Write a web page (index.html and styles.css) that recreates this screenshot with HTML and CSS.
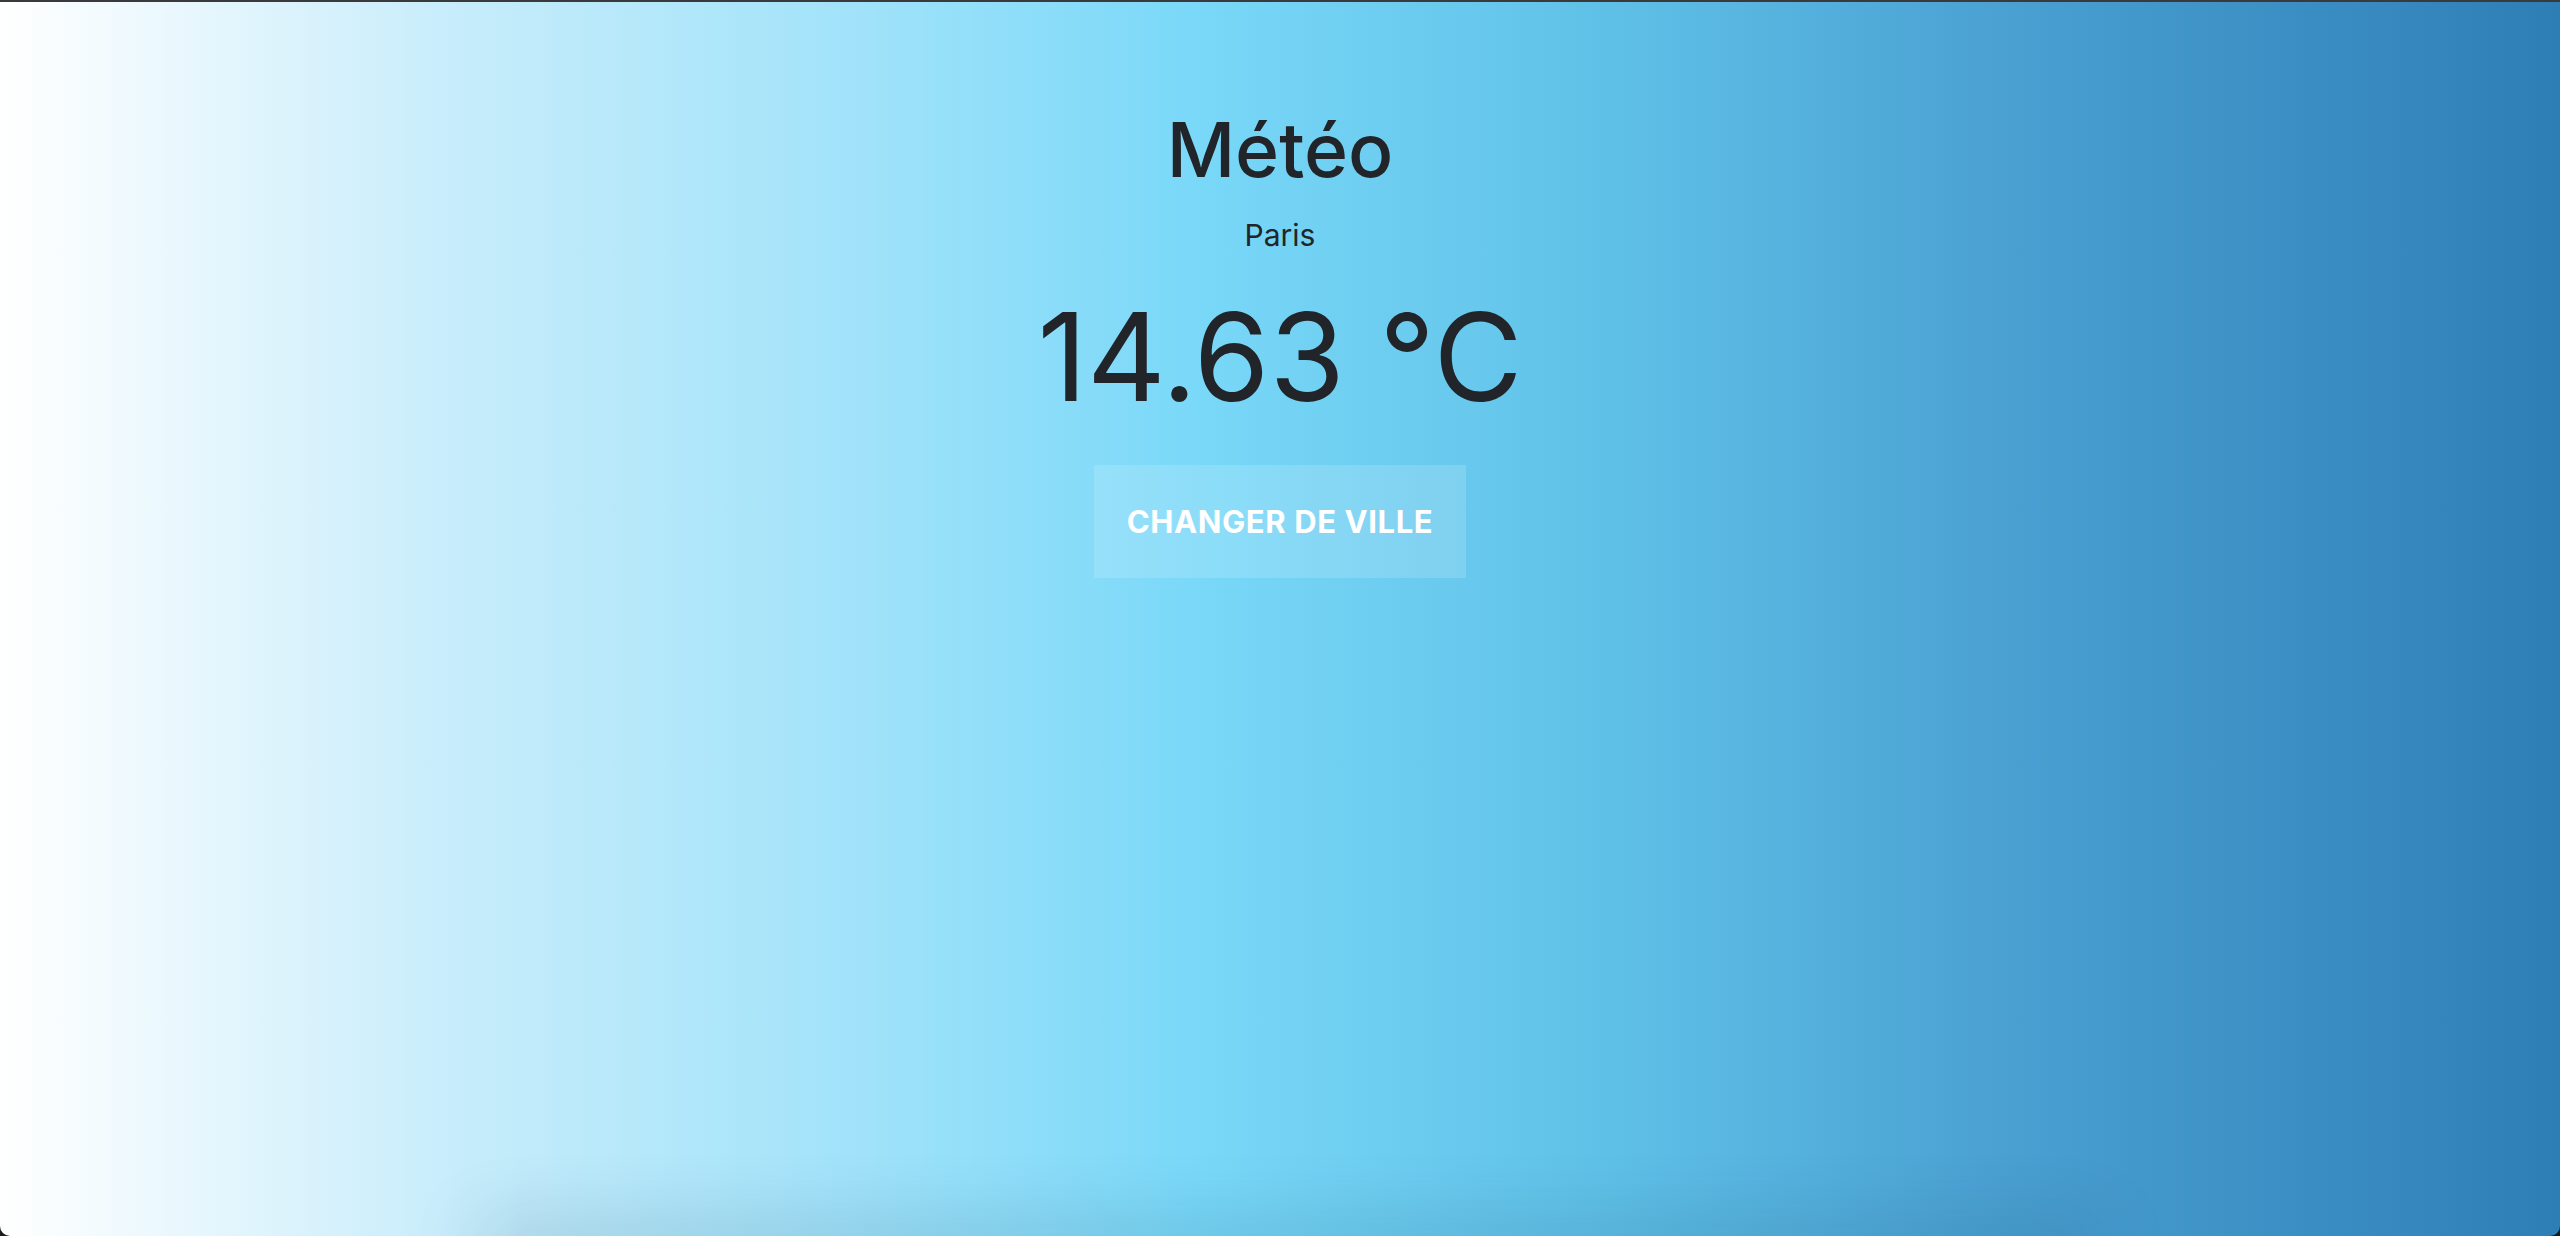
FILE: index.html
```html
<!DOCTYPE html>
<html lang="fr">
<head>
<meta charset="utf-8">
<title>Météo</title>
<link rel="stylesheet" href="styles.css">
</head>
<body>
<div class="app">
  <main class="weather">
    <h1 class="title">Météo</h1>
    <p class="city">Paris</p>
    <p class="temp">14.63 °C</p>
    <button class="change-btn" type="button">Changer de ville</button>
  </main>
  <div class="bottom-shadow"></div>
</div>
</body>
</html>
```

FILE: styles.css
```css
html, body {
  margin: 0;
  padding: 0;
  height: 100%;
  background: #1b1b1b;
}

.app {
  position: relative;
  box-sizing: border-box;
  height: 100vh;
  overflow: hidden;
  border-top: 2px solid #3a3a3c;
  border-radius: 0 0 10px 10px;
  background: linear-gradient(90deg, #ffffff 0%, #c9edfb 17%, #a2e3fa 33%, #79d8f8 47%, #5fc0e7 63%, #4aa1d2 78%, #2e7eb6 100%);
  font-family: Inter, "Noto Sans", sans-serif;
  color: #212529;
}

.weather {
  display: flex;
  flex-direction: column;
  align-items: center;
  padding-top: 110px;
}

.title {
  margin: 0;
  font-size: 75px;
  line-height: 1;
  font-weight: 500;
}

.city {
  margin: 33px 0 0;
  font-size: 30px;
  line-height: 1;
  font-weight: 400;
}

.temp {
  margin: 46px 0 0;
  font-size: 122px;
  line-height: 1;
  font-weight: 400;
}

.change-btn {
  margin-top: 47px;
  padding: 41px 33px;
  border: 0;
  background: rgba(255, 255, 255, 0.15);
  color: #ffffff;
  font-family: Inter, "Noto Sans", sans-serif;
  font-size: 31px;
  line-height: 1;
  font-weight: 700;
  letter-spacing: 0.6px;
  text-transform: uppercase;
  cursor: pointer;
}

.bottom-shadow {
  position: absolute;
  left: 480px;
  right: 460px;
  top: 100%;
  height: 40px;
  box-shadow: 0 -10px 70px rgba(20, 60, 90, 0.22);
}
```
